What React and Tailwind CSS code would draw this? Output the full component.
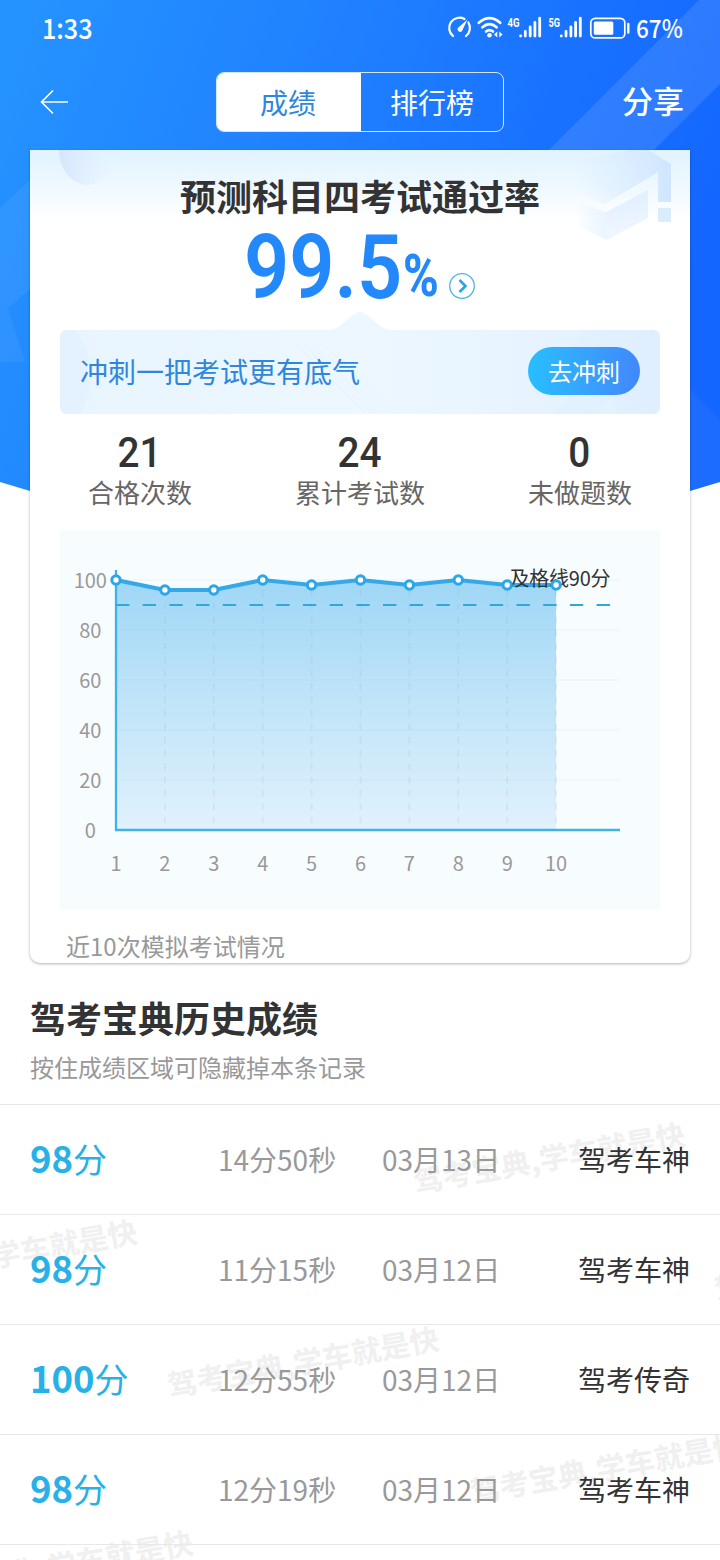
const scores = [100, 96, 96, 100, 98, 100, 98, 100, 98, 98];
const px = (i) => 56 + i * 48.9;
const py = (v) => 300 - v * 2.5;

const history = [
  { score: 98, time: '14分50秒', date: '03月13日', rank: '驾考车神' },
  { score: 98, time: '11分15秒', date: '03月12日', rank: '驾考车神' },
  { score: 100, time: '12分55秒', date: '03月12日', rank: '驾考传奇' },
  { score: 98, time: '12分19秒', date: '03月12日', rank: '驾考车神' },
];

// Centre points of the watermark, relative to the list
const watermarks = [
  [549, 52],
  [1, 149],
  [850, 160],
  [303, 256],
  [606, 362],
  [57, 460],
];

function StatusIcons() {
  return (
    <svg className="h-[30px] w-[184px]" viewBox="446 12.5 184 30" fill="none" stroke="#fff">
      <path d="M453 35.500 A10.300 10.300 0 0 1 464.500 18.500 M468.400 22 A10.300 10.300 0 0 1 466 35.500" strokeWidth="2.200" strokeLinecap="round" />
      <path d="M467.500 19 L462 30.500 A2.600 2.600 0 0 1 457.800 27.500 Z" fill="#fff" stroke="none" />
      <g strokeWidth="2.600" strokeLinecap="round">
        <path d="M478.800 22.300 Q489.500 13 500.200 22.300" />
        <path d="M482.400 26.800 Q489.500 20.600 496.600 26.800" />
        <path d="M486 31 Q489.500 28.200 493 31" />
      </g>
      <circle cx="489.500" cy="34.800" r="2.300" fill="#fff" stroke="none" />
      <path d="M497.300 31 V37 L494 34 Z M499.300 31 V37 L502.500 34 Z" fill="#fff" stroke="none" />
      <g strokeWidth="2.800" strokeLinecap="round">
        <path d="M520.600 35.300 V35.600 M525.300 31 V35.600 M530.200 26.500 V35.600 M534.900 22 V35.600 M539.700 17.700 V35.600" />
        <path d="M561.300 35.300 V35.600 M566 31 V35.600 M570.900 26.500 V35.600 M575.600 22 V35.600 M580.300 17.700 V35.600" />
      </g>
      <g fill="#fff" stroke="none" fontFamily="Roboto, sans-serif" fontWeight="700" fontSize="12.500">
        <text x="507.500" y="26" textLength="12" lengthAdjust="spacingAndGlyphs">4G</text>
        <text x="548.500" y="26" textLength="11.500" lengthAdjust="spacingAndGlyphs">5G</text>
      </g>
      <rect x="590.800" y="17.800" width="34" height="19.600" rx="4.500" strokeWidth="1.700" />
      <rect x="593.800" y="21" width="19.500" height="13.200" rx="1.500" fill="#fff" stroke="none" />
      <path d="M628.300 23.500 V32" strokeWidth="2.400" strokeLinecap="round" />
    </svg>
  );
}

function HeaderArt() {
  return (
    <svg className="absolute left-0 top-0 h-[600px] w-[720px]" viewBox="0 0 720 600">
      <defs>
        <linearGradient id="sky" gradientUnits="userSpaceOnUse" x1="0" y1="60" x2="690" y2="300">
          <stop offset="0" stopColor="#2593ff" />
          <stop offset="0.5" stopColor="#1e7dff" />
          <stop offset="1" stopColor="#1366ff" />
        </linearGradient>
      </defs>
      <path d="M0 0 H720 V482 L690 491 H30 L0 482 Z" fill="url(#sky)" />
      <path d="M549 150 L699 0 H720 V84 L654 150 Z" fill="#fff" fillOpacity="0.11" />
      <path d="M0 208 L30 180 V289 L8 308 L0 296 Z" fill="#fff" fillOpacity="0.06" />
      <path d="M0 296 L8 308 L25 362 H0 Z" fill="#fff" fillOpacity="0.05" />
      <path d="M690 389 L720 420 V482 L690 491 Z" fill="#fff" fillOpacity="0.04" />
    </svg>
  );
}

function CardArt() {
  return (
    <svg className="absolute left-0 top-0 h-[110px] w-[660px]" viewBox="0 0 660 110">
      <defs>
        <linearGradient id="fade" x1="0" y1="0" x2="0" y2="1">
          <stop offset="0" stopColor="#e1f3ff" />
          <stop offset="0.35" stopColor="#edf8ff" />
          <stop offset="0.75" stopColor="#fff" />
        </linearGradient>
        <linearGradient id="ball" x1="0" y1="0" x2="1" y2="0">
          <stop offset="0" stopColor="#d6e5fc" />
          <stop offset="1" stopColor="#e4f2ff" stopOpacity="0.1" />
        </linearGradient>
        <linearGradient id="cube" x1="0" y1="0" x2="1" y2="0">
          <stop offset="0" stopColor="#d4e9ff" stopOpacity="0" />
          <stop offset="1" stopColor="#d0e6fe" />
        </linearGradient>
        <linearGradient id="base" x1="0.3" y1="0" x2="0.5" y2="1">
          <stop offset="0" stopColor="#deeeff" />
          <stop offset="1" stopColor="#f2f8ff" />
        </linearGradient>
        <linearGradient id="side" x1="0" y1="0" x2="1" y2="0">
          <stop offset="0" stopColor="#e6f3ff" stopOpacity="0" />
          <stop offset="1" stopColor="#e6f3ff" stopOpacity="0.9" />
        </linearGradient>
      </defs>
      <rect width="660" height="92" fill="url(#fade)" />
      <path d="M29 0 A29 35 0 0 0 58 35 A29 35 0 0 0 87 0 Z" fill="url(#ball)" />
      <path d="M545 10 L600 0 H618 L641 14 V52 H628 V22 L575 54 L545 42 Z" fill="url(#cube)" />
      <path d="M576 62 L618 40 V68 L577 90 Z" fill="url(#base)" />
      <path d="M544 50 L576 62 L577 90 L544 74 Z" fill="url(#side)" />
      <rect x="628" y="58" width="13" height="14" fill="#dbecfe" />
    </svg>
  );
}

function Banner() {
  return (
    <div className="relative mx-[30px] flex h-[102px] items-center justify-between pb-[2px] pl-5 pr-5 pt-[18px]">
      <svg className="absolute left-0 top-0 h-[102px] w-[600px]" viewBox="0 0 600 102">
        <defs>
          <linearGradient id="ban" x1="0" y1="0" x2="1" y2="0">
            <stop offset="0" stopColor="#e8f5ff" />
            <stop offset="0.5" stopColor="#edf7ff" />
            <stop offset="1" stopColor="#e2f1ff" />
          </linearGradient>
        </defs>
        <path
          d="M7 18 H268 Q275 18 281 13 L294 2 Q300 -2 306 2 L319 13 Q325 18 332 18 H593 Q600 18 600 25 V95 Q600 102 593 102 H7 Q0 102 0 95 V25 Q0 18 7 18 Z"
          fill="url(#ban)"
        />
        <path d="M0 25 Q0 18 7 18 H16 Q44 58 20 102 H7 Q0 102 0 95 Z" fill="#d9ecff" fillOpacity="0.3" />
        <path d="M498 18 L513 36 L524 18 H593 Q600 18 600 25 V95 Q600 102 593 102 H558 L552 84 L538 102 H490 L540 60 Z" fill="#d6eaff" fillOpacity="0.2" />
        <path d="M238 34 L306 102 M252 34 L320 102 M266 34 L334 102 M245 34 L313 102" stroke="#dcedfc" strokeOpacity="0.5" />
      </svg>
      <span className="relative -mt-px text-[28px] leading-[40px] text-[#2e86de]">冲刺一把考试更有底气</span>
      <button className="relative flex h-[48px] w-[112px] items-center justify-center rounded-full bg-gradient-to-r from-[#27beff] to-[#4088fb] pb-px text-[24px] text-white">
        去冲刺
      </button>
    </div>
  );
}

function Stat({ value, label }) {
  return (
    <div className="flex flex-1 flex-col items-center">
      <span className="scale-x-90 pr-[2px] font-[Roboto] text-[43px] font-medium leading-[42px] text-[#333]">{value}</span>
      <span className="text-[26px] leading-[38px] text-[#666]">{label}</span>
    </div>
  );
}

function Chart() {
  const line = scores.map((v, i) => `${px(i)},${py(v)}`).join(' ');
  return (
    <svg className="mx-[30px] block h-[380px] w-[600px] bg-[#f7fcff]" viewBox="0 0 600 380" fontSize="20">
      <defs>
        <linearGradient id="area" x1="0" y1="0" x2="0" y2="1">
          <stop offset="0" stopColor="#9fd7f6" />
          <stop offset="0.45" stopColor="#bee3f8" />
          <stop offset="1" stopColor="#e1f1fd" />
        </linearGradient>
      </defs>
      <polygon points={`${line} ${px(9)},300 56,300`} fill="url(#area)" />
      {[0, 1, 2, 3, 4].map((k) => (
        <path key={k} d={`M56 ${50 + k * 50} H560`} stroke="#8aa" strokeOpacity="0.07" strokeWidth="1.500" />
      ))}
      {scores.slice(1).map((v, i) => (
        <path key={i} d={`M${px(i + 1)} 293.300 V${py(v) + 5}`} stroke="#8ab" strokeOpacity="0.15" strokeWidth="1.800" strokeDasharray="6.670 6.670" />
      ))}
      <path d="M56 40 V300 H560" fill="none" stroke="#3fb3e6" strokeWidth="2.300" />
      <path d="M56 75 H550" stroke="#33a6dc" strokeWidth="2" strokeDasharray="13.350 13.350" />
      <polyline points={line} fill="none" stroke="#35a8e8" strokeWidth="4" />
      <text x="449.500" y="56" fill="#333" fontSize="20" textLength="101">及格线90分</text>
      {scores.map((v, i) => (
        <circle key={i} cx={px(i)} cy={py(v)} r="4.200" fill="#fff" stroke="#2ba6e6" strokeWidth="3" />
      ))}
      {[100, 80, 60, 40, 20, 0].map((v) => (
        <text key={v} x="30.300" y={py(v) + 8} textAnchor="middle" fill="#999">{v}</text>
      ))}
      {scores.map((_, i) => (
        <text key={i} x={px(i)} y="340.500" textAnchor="middle" fill="#999">{i + 1}</text>
      ))}
    </svg>
  );
}

export default function App() {
  return (
    <div className="relative h-[1560px] w-[720px] overflow-hidden bg-white font-['Noto_Sans_CJK_SC',sans-serif]">
      <HeaderArt />
      <div className="relative flex h-[56px] items-center pl-[42px] text-white">
        <span className="w-[404px] origin-left scale-x-90 pb-[2px] text-[28px] font-medium leading-[54px]">1:33</span>
        <StatusIcons />
        <span className="ml-[6px] origin-left scale-x-90 pb-[3px] text-[25px] font-medium leading-[54px]">67%</span>
      </div>

      <header className="relative flex h-[94px] items-center pb-[2px] pl-10 pr-9 text-white">
        <svg className="h-[26px] w-[29px]" viewBox="0 0 29 26" fill="none" stroke="#fff" strokeWidth="1.600">
          <path d="M28 13 H2 M13 1.500 L1.500 13 L13 24.500" />
        </svg>
        <div className="ml-[147px] flex h-[60px] w-[288px] overflow-hidden rounded-lg border border-white/80 text-[28px]">
          <div className="flex w-[144px] items-center justify-center bg-white pb-px pr-[2px] text-[#2e86de]">成绩</div>
          <div className="flex flex-1 items-center justify-center pb-px">排行榜</div>
        </div>
        <span className="ml-auto pb-[3px] text-[31px] font-medium">分享</span>
      </header>

      <section className="relative mx-[30px] h-[813px] overflow-hidden rounded-b-[10px] bg-white shadow-[0_1px_3px_rgba(0,0,0,0.3)]">
        <CardArt />
        <h1 className="relative h-[72px] pt-[19px] text-center text-[36px] font-bold leading-[52px] text-[#333]">预测科目四考试通过率</h1>
        <div className="relative flex h-[90px] items-end pl-[214px] text-[#2389fb]">
          <span className="block w-[159px] origin-left scale-x-89 font-[Roboto] text-[89px] font-semibold leading-[88px]">99.5</span>
          <span className="block w-[45px] origin-left scale-x-82 font-[Roboto] text-[59px] font-extrabold leading-[72px]">%</span>
          <svg className="mb-[12px] h-[28px] w-[28px]" viewBox="0 0 28 28" fill="none">
            <circle cx="14" cy="14" r="12.300" stroke="#4db5e2" strokeWidth="1.300" />
            <path d="M11.500 8 L17.500 14 L11.500 20" stroke="#2aa5dd" strokeWidth="2.600" />
          </svg>
        </div>
        <Banner />
        <div className="flex h-[116px] pt-[17px]">
          <Stat value="21" label="合格次数" />
          <Stat value="24" label="累计考试数" />
          <Stat value="0" label="未做题数" />
        </div>
        <Chart />
        <p className="pl-9 pt-[18px] text-[24px] leading-[36px] text-[#999]">近10次模拟考试情况</p>
      </section>

      <section className="relative">
        <h2 className="px-[30px] pt-[28px] text-[36px] font-bold leading-[52px] text-[#333]">驾考宝典历史成绩</h2>
        <p className="px-[30px] pt-[6px] text-[24px] leading-[36px] text-[#999]">按住成绩区域可隐藏掉本条记录</p>
        <div className="relative mt-[19px] border-t border-[#e8e8e8]">
          {watermarks.map(([x, y]) => (
            <span
              key={x}
              className="absolute w-[280px] -translate-x-1/2 -translate-y-1/2 -rotate-10 whitespace-nowrap text-center text-[29.5px] font-bold leading-none text-[#f0f0f0]"
              style={{ left: x, top: y }}
            >
              驾考宝典,学车就是快
            </span>
          ))}
          {history.map((h, i) => (
            <div key={i} className="relative flex h-[110px] items-center border-b border-[#e8e8e8] px-[30px] pb-[2px] text-[28px] text-[#999]">
              <div className="w-[188px] text-[34px] text-[#27b1e6]">
                <span className="text-[36.5px] font-bold">{h.score}</span>分
              </div>
              <span className="w-[164px]">{h.time}</span>
              <span className="flex-1">{h.date}</span>
              <span className="text-[#333]">{h.rank}</span>
            </div>
          ))}
        </div>
      </section>
    </div>
  );
}
